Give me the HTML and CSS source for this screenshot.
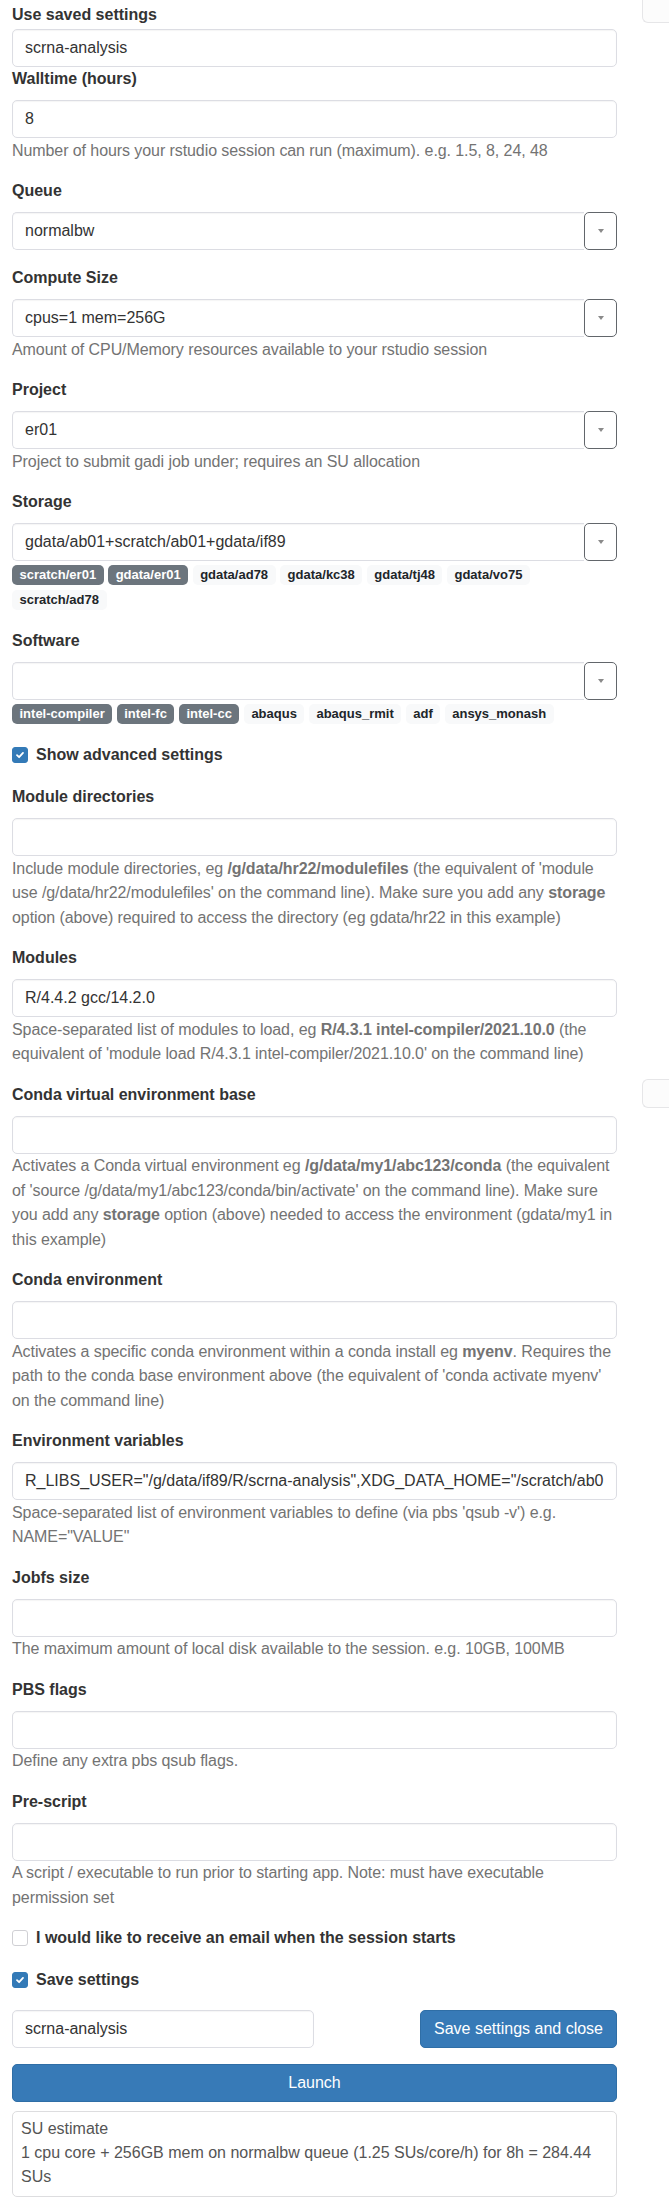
FILE: index.html
```html
<!DOCTYPE html>
<html lang="en">
<head>
<meta charset="utf-8">
<title>RStudio session</title>
<link rel="stylesheet" href="styles.css">
</head>
<body>
<div class="page">
  <form class="form">
    <div class="group group-saved">
      <label class="label">Use saved settings</label>
      <input class="control" type="text" value="scrna-analysis">
    </div>

    <div class="group">
      <label class="label">Walltime (hours)</label>
      <input class="control" type="text" value="8">
      <p class="help">Number of hours your rstudio session can run (maximum). e.g. 1.5, 8, 24, 48</p>
    </div>

    <div class="group">
      <label class="label">Queue</label>
      <div class="select"><span class="select-value">normalbw</span><span class="select-btn"><span class="caret"></span></span></div>
    </div>

    <div class="group">
      <label class="label">Compute Size</label>
      <div class="select"><span class="select-value">cpus=1 mem=256G</span><span class="select-btn"><span class="caret"></span></span></div>
      <p class="help">Amount of CPU/Memory resources available to your rstudio session</p>
    </div>

    <div class="group">
      <label class="label">Project</label>
      <div class="select"><span class="select-value">er01</span><span class="select-btn"><span class="caret"></span></span></div>
      <p class="help">Project to submit gadi job under; requires an SU allocation</p>
    </div>

    <div class="group">
      <label class="label">Storage</label>
      <div class="select"><span class="select-value">gdata/ab01+scratch/ab01+gdata/if89</span><span class="select-btn"><span class="caret"></span></span></div>
      <div class="badges">
        <span class="badge badge-dark">scratch/er01</span>
        <span class="badge badge-dark">gdata/er01</span>
        <span class="badge">gdata/ad78</span>
        <span class="badge">gdata/kc38</span>
        <span class="badge">gdata/tj48</span>
        <span class="badge">gdata/vo75</span>
        <span class="badge">scratch/ad78</span>
      </div>
    </div>

    <div class="group">
      <label class="label">Software</label>
      <div class="select"><span class="select-value"></span><span class="select-btn"><span class="caret"></span></span></div>
      <div class="badges">
        <span class="badge badge-dark">intel-compiler</span>
        <span class="badge badge-dark">intel-fc</span>
        <span class="badge badge-dark">intel-cc</span>
        <span class="badge">abaqus</span>
        <span class="badge">abaqus_rmit</span>
        <span class="badge">adf</span>
        <span class="badge">ansys_monash</span>
      </div>
    </div>

    <label class="check-row">
      <span class="check on"><svg width="10" height="10" viewBox="0 0 10 10"><path d="M2 5.2 L4.1 7.2 L8 2.9" fill="none" stroke="#fff" stroke-width="1.8" stroke-linecap="round" stroke-linejoin="round"/></svg></span>
      <span>Show advanced settings</span>
    </label>

    <div class="group">
      <label class="label">Module directories</label>
      <input class="control" type="text" value="">
      <p class="help">Include module directories, eg <strong>/g/data/hr22/modulefiles</strong> (the equivalent of 'module<br>use /g/data/hr22/modulefiles' on the command line). Make sure you add any <strong>storage</strong><br>option (above) required to access the directory (eg gdata/hr22 in this example)</p>
    </div>

    <div class="group">
      <label class="label">Modules</label>
      <input class="control" type="text" value="R/4.4.2 gcc/14.2.0">
      <p class="help">Space-separated list of modules to load, eg <strong>R/4.3.1 intel-compiler/2021.10.0</strong> (the<br>equivalent of 'module load R/4.3.1 intel-compiler/2021.10.0' on the command line)</p>
    </div>

    <div class="group">
      <label class="label">Conda virtual environment base</label>
      <input class="control" type="text" value="">
      <p class="help">Activates a Conda virtual environment eg <strong>/g/data/my1/abc123/conda</strong> (the equivalent<br>of 'source /g/data/my1/abc123/conda/bin/activate' on the command line). Make sure<br>you add any <strong>storage</strong> option (above) needed to access the environment (gdata/my1 in<br>this example)</p>
    </div>

    <div class="group">
      <label class="label">Conda environment</label>
      <input class="control" type="text" value="">
      <p class="help">Activates a specific conda environment within a conda install eg <strong>myenv</strong>. Requires the<br>path to the conda base environment above (the equivalent of 'conda activate myenv'<br>on the command line)</p>
    </div>

    <div class="group">
      <label class="label">Environment variables</label>
      <input class="control" type="text" value="R_LIBS_USER=&quot;/g/data/if89/R/scrna-analysis&quot;,XDG_DATA_HOME=&quot;/scratch/ab01/R/scrna-analysis&quot;">
      <p class="help">Space-separated list of environment variables to define (via pbs 'qsub -v') e.g.<br>NAME="VALUE"</p>
    </div>

    <div class="group">
      <label class="label">Jobfs size</label>
      <input class="control" type="text" value="">
      <p class="help">The maximum amount of local disk available to the session. e.g. 10GB, 100MB</p>
    </div>

    <div class="group">
      <label class="label">PBS flags</label>
      <input class="control" type="text" value="">
      <p class="help">Define any extra pbs qsub flags.</p>
    </div>

    <div class="group">
      <label class="label">Pre-script</label>
      <input class="control" type="text" value="">
      <p class="help">A script / executable to run prior to starting app. Note: must have executable<br>permission set</p>
    </div>

    <label class="check-row">
      <span class="check"></span>
      <span>I would like to receive an email when the session starts</span>
    </label>

    <label class="check-row">
      <span class="check on"><svg width="10" height="10" viewBox="0 0 10 10"><path d="M2 5.2 L4.1 7.2 L8 2.9" fill="none" stroke="#fff" stroke-width="1.8" stroke-linecap="round" stroke-linejoin="round"/></svg></span>
      <span>Save settings</span>
    </label>

    <div class="save-row">
      <input class="control save-name" type="text" value="scrna-analysis">
      <button class="btn" type="button">Save settings and close</button>
    </div>

    <button class="btn btn-block" type="button">Launch</button>

    <div class="su">SU estimate<br>1 cpu core + 256GB mem on normalbw queue (1.25 SUs/core/h) for 8h = 284.44 SUs</div>
  </form>

  <aside class="side">
    <div class="side-box side-top"></div>
    <div class="side-box side-mid"></div>
  </aside>
</div>
</body>
</html>
```

FILE: styles.css
```css
html, body {
  margin: 0;
  padding: 0;
  background: #fff;
}

body {
  font-family: "Liberation Sans", Arial, Helvetica, sans-serif;
  font-size: 16px;
  color: #333;
  overflow-x: hidden;
}

.page {
  display: flex;
  gap: 25px;
  padding-left: 12px;
}

.form {
  width: 605px;
  flex: none;
  padding-top: 3px;
  margin: 0;
}

.side {
  flex: 1;
  min-width: 0;
}

.side-box {
  background: #fcfcfc;
  border: 1px solid #e6e6e8;
  border-right: 0;
  width: 60px;
}

.side-top {
  height: 22px;
  border-top: 0;
  border-bottom-left-radius: 6px;
}

.side-mid {
  margin-top: 1056px;
  height: 27px;
  border-radius: 6px 0 0 6px;
}

.group {
  margin-bottom: 16px;
}

.group-saved {
  margin-bottom: 0;
}

.label {
  display: block;
  font-weight: 700;
  line-height: 24px;
  margin-bottom: 9px;
  color: #333;
}

.group-saved .label {
  margin-bottom: 2px;
}

.control {
  display: block;
  width: 100%;
  box-sizing: border-box;
  height: 38px;
  margin: 0;
  padding: 0 12px;
  font: inherit;
  color: #333;
  background: #fff;
  border: 1px solid #dcdde3;
  border-radius: 5px;
  box-shadow: inset 0 1px 1px rgba(0, 0, 0, 0.04);
  outline: none;
}

.help {
  margin: 0.5px 0 0;
  line-height: 24.5px;
  color: #737373;
  white-space: nowrap;
  letter-spacing: -0.08px;
}

.help strong {
  font-weight: 700;
}

.select {
  display: flex;
  height: 38px;
}

.select-value {
  flex: 1;
  display: flex;
  align-items: center;
  padding: 0 12px;
  border: 1px solid #dcdde3;
  border-right: 0;
  border-radius: 5px 0 0 5px;
  box-shadow: inset 0 1px 1px rgba(0, 0, 0, 0.04);
  white-space: nowrap;
  overflow: hidden;
}

.select-btn {
  width: 31px;
  flex: none;
  display: flex;
  align-items: center;
  justify-content: center;
  border: 1px solid #62666b;
  border-radius: 5px;
  background: #fff;
}

.caret {
  width: 0;
  height: 0;
  border-left: 3.5px solid transparent;
  border-right: 3.5px solid transparent;
  border-top: 4px solid #8a8a8a;
}

.badges {
  display: flex;
  flex-wrap: wrap;
  gap: 5px 4.5px;
  margin-top: 4px;
  padding-bottom: 3px;
}

.badge {
  display: inline-block;
  height: 20px;
  line-height: 20px;
  padding: 0 7.5px;
  font-size: 13px;
  font-weight: 700;
  border-radius: 5px;
  background: #f8f9fa;
  color: #212529;
  white-space: nowrap;
}

.badge-dark {
  background: #6c757d;
  color: #fff;
}

.check-row {
  display: flex;
  align-items: center;
  gap: 8px;
  line-height: 24px;
  font-weight: 700;
  margin-bottom: 18px;
  color: #333;
}

.check {
  width: 16px;
  height: 16px;
  box-sizing: border-box;
  flex: none;
  border: 1px solid #d0d0d4;
  border-radius: 3px;
  background: #fff;
  display: flex;
  align-items: center;
  justify-content: center;
}

.check.on {
  background: #337ab7;
  border-color: #337ab7;
}

.save-row {
  display: flex;
  justify-content: space-between;
  margin-bottom: 16px;
}

.save-name {
  width: 302px;
}

.btn {
  font: inherit;
  color: #fff;
  background: #377ab7;
  border: 1px solid #2f6ea6;
  border-radius: 5px;
  height: 38px;
  padding: 0 13px;
  margin: 0;
  cursor: pointer;
}

.btn-block {
  display: block;
  width: 100%;
}

.su {
  margin-top: 9px;
  border: 1px solid #dddddf;
  border-radius: 5px;
  padding: 5px 8px 7px;
  line-height: 24px;
  color: #555;
}
```
